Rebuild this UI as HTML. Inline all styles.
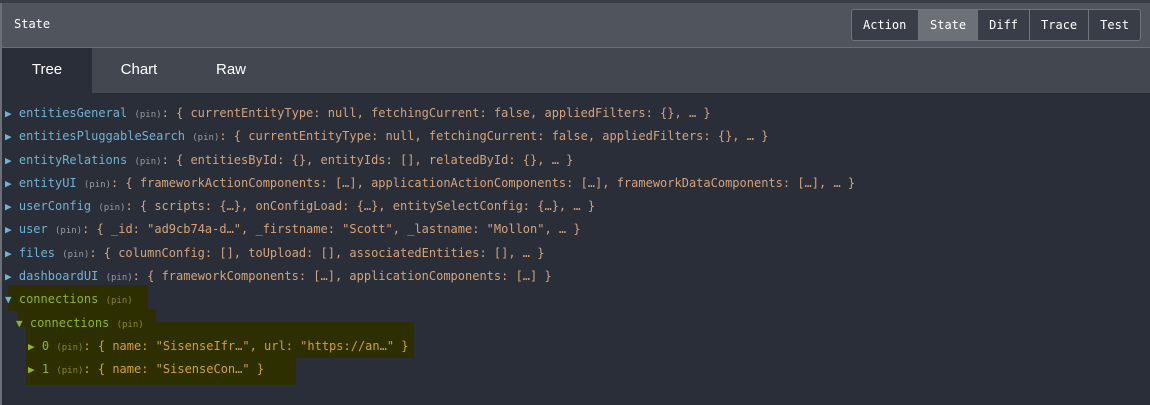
<!DOCTYPE html>
<html><head><style>
body{margin:0;width:1150px;height:405px;background:#2a2e38;overflow:hidden;position:relative;font-family:"DejaVu Sans Mono","Liberation Mono",monospace}
.top{position:absolute;left:0;top:0;width:1150px;height:3px;background:#3a3e47}
.lb{position:absolute;left:0;top:3px;width:2px;height:402px;background:#6a6e76}
.hdr{position:absolute;left:2px;top:3px;width:1148px;height:44px;background:#50545c;border-bottom:1px solid #6b6f77}
.hdr .t{position:absolute;left:12px;top:14px;color:#fff;font-size:12px}
.btns{position:absolute;left:849px;top:6px;height:30px;display:flex;border:1px solid #70747c;border-radius:3px;overflow:hidden}
.btns div{background:#393d48;color:#fff;font-size:12px;line-height:30px;padding:0 11px;border-left:1px solid #70747c}
.btns div:first-child{border-left:0;padding:0 11px 0 11px;width:44px}
.btns div.a{background:#6c7077}
.tabs{position:absolute;left:2px;top:48px;width:1148px;height:45px;background:#43474f}
.tab{position:absolute;top:0;height:45px;line-height:44px;color:#fff;font-family:"Liberation Sans",sans-serif;font-size:15px;text-align:center;width:90px}
.tab.a{background:#2a2e38}
.hl{position:absolute;background:#2d2f00}
.row{position:absolute;left:5px;font-size:12px;white-space:pre;color:#d3a37c;line-height:16px}
.k{color:#6fb3d2}.p{color:#9a9c9e;font-size:9px}.ar{color:#6fb3d2;font-size:11px}
.g{color:#8db52a}.gp{color:#8a8a20;font-size:9px}.y{color:#d0a03a}
</style></head><body>
<div class="top"></div><div class="lb"></div>
<div class="hdr"><div class="t">State</div>
<div class="btns"><div>Action</div><div class="a">State</div><div>Diff</div><div>Trace</div><div>Test</div></div></div>
<div class="tabs"><div class="tab a" style="left:0">Tree</div><div class="tab" style="left:92px">Chart</div><div class="tab" style="left:184px">Raw</div></div>
<div class="hl" style="left:8px;top:285px;width:140px;height:26px"></div>
<div class="hl" style="left:18px;top:309px;width:138px;height:18px"></div>
<div class="hl" style="left:26px;top:322px;width:388px;height:36px"></div>
<div class="hl" style="left:26px;top:355px;width:270px;height:30px"></div>
<div class="row" style="top:105px"><span class="ar">▶</span> <span class="k">entitiesGeneral</span> <span class="p">(pin)</span>: { currentEntityType: null, fetchingCurrent: false, appliedFilters: {}, … }</div>
<div class="row" style="top:128px"><span class="ar">▶</span> <span class="k">entitiesPluggableSearch</span> <span class="p">(pin)</span>: { currentEntityType: null, fetchingCurrent: false, appliedFilters: {}, … }</div>
<div class="row" style="top:152px"><span class="ar">▶</span> <span class="k">entityRelations</span> <span class="p">(pin)</span>: { entitiesById: {}, entityIds: [], relatedById: {}, … }</div>
<div class="row" style="top:175px"><span class="ar">▶</span> <span class="k">entityUI</span> <span class="p">(pin)</span>: { frameworkActionComponents: […], applicationActionComponents: […], frameworkDataComponents: […], … }</div>
<div class="row" style="top:198px"><span class="ar">▶</span> <span class="k">userConfig</span> <span class="p">(pin)</span>: { scripts: {…}, onConfigLoad: {…}, entitySelectConfig: {…}, … }</div>
<div class="row" style="top:221px"><span class="ar">▶</span> <span class="k">user</span> <span class="p">(pin)</span>: { _id: "ad9cb74a-d…", _firstname: "Scott", _lastname: "Mollon", … }</div>
<div class="row" style="top:245px"><span class="ar">▶</span> <span class="k">files</span> <span class="p">(pin)</span>: { columnConfig: [], toUpload: [], associatedEntities: [], … }</div>
<div class="row" style="top:268px"><span class="ar">▶</span> <span class="k">dashboardUI</span> <span class="p">(pin)</span>: { frameworkComponents: […], applicationComponents: […] }</div>
<div class="row" style="top:291px"><span class="ar">▼</span> <span class="g">connections</span> <span class="gp">(pin)</span></div>
<div class="row" style="top:315px;left:16px"><span class="g" style="font-size:11px">▼</span> <span class="g">connections</span> <span class="gp">(pin)</span></div>
<div class="row" style="top:338px;left:28px"><span class="g" style="font-size:11px">▶</span> <span class="g">0</span> <span class="gp">(pin)</span><span class="y">: { name: "SisenseIfr…", url: "https://an…" }</span></div>
<div class="row" style="top:361px;left:28px"><span class="g" style="font-size:11px">▶</span> <span class="g">1</span> <span class="gp">(pin)</span><span class="y">: { name: "SisenseCon…" }</span></div>
</body></html>
